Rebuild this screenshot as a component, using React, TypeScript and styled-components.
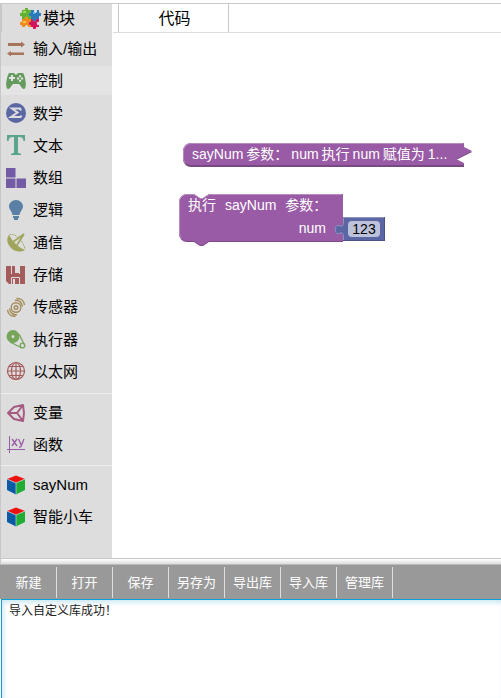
import React, { useState } from "react";
import styled, { createGlobalStyle } from "styled-components";

const sans = `"Liberation Sans", "Noto Sans CJK SC", sans-serif`;

const GlobalStyle = createGlobalStyle`
  *, *::before, *::after { box-sizing: border-box; }
  html, body, #root { height: 100%; }
  body { margin: 0; background: #fff; font-family: ${sans}; color: #000; }
  button, input, textarea { font: inherit; }
`;

const Page = styled.div`
  min-height: 100%;
  display: flex;
  flex-direction: column;
  padding-top: 3px;
`;

const Workbench = styled.main`
  display: grid;
  grid-template-columns: 112px minmax(0, 1fr);
  border-top: 1px solid #c8c8c8;
  border-left: 1px solid #c8c8c8;
  border-bottom: 1px solid #c8c8c8;
`;

const Sidebar = styled.aside`
  background: #ddd;
  margin-right: 1px;
  padding-bottom: 21px;
`;

const SidebarTitle = styled.h1`
  margin: 0;
  height: 28px;
  border-left: 1px solid #c8c8c8;
  padding: 0 0 3px 18px;
  display: flex;
  align-items: center;
  gap: 2px;
  font-size: 16px;
  font-weight: 400;
  svg { position: relative; top: 2px; }
`;

const Group = styled.ul<{ $size: "large" | "small" }>`
  list-style: none;
  margin: 0;
  padding: ${(p) => (p.$size === "large" ? "2px 0 7px" : "4px 0 6px")};
  min-height: ${(p) => (p.$size === "large" ? "361px" : "72px")};
  display: flex;
  flex-direction: column;
  justify-content: space-between;
  & + & { border-top: 1px solid #eee; }
`;

const Category = styled.button<{ $active: boolean }>`
  display: flex;
  align-items: center;
  gap: 7px;
  width: 100%;
  height: 29px;
  padding: 0 0 0 5px;
  border: 0;
  background: ${(p) => (p.$active ? "#e4e4e4" : "transparent")};
  color: #000;
  font-size: 15px;
  line-height: 29px;
  text-align: left;
  white-space: nowrap;
  svg { flex: none; }
`;

const Editor = styled.section`
  display: flex;
  flex-direction: column;
`;

const TabBar = styled.div`
  height: 29px;
  display: flex;
  padding-left: 5px;
  border-bottom: 1px solid #ddd;
`;

const Tab = styled.button`
  width: 111px;
  padding: 0 0 3px 2px;
  border: 1px solid #c8c8c8;
  border-width: 0 1px;
  background: #fff;
  color: #000;
  font-size: 16px;
`;

const Canvas = styled.div`
  position: relative;
  flex: 1;
`;

const Block = styled.div<{ $x: number; $y: number }>`
  position: absolute;
  left: ${(p) => p.$x}px;
  top: ${(p) => p.$y}px;
  color: #fff;
  font-size: 14px;
  line-height: 23px;
  white-space: nowrap;
`;

const Shape = styled.svg`
  position: absolute;
  left: 0;
  top: 0;
  overflow: visible;
`;

const Line = styled.div<{ $gap: number; $end?: boolean }>`
  position: relative;
  display: flex;
  align-items: center;
  gap: ${(p) => p.$gap}px;
  padding: ${(p) => (p.$end ? "0 17px 0 0" : "0 9px")};
  justify-content: ${(p) => (p.$end ? "flex-end" : "flex-start")};
  height: 23px;
`;

const ProcedureBody = styled.div`
  width: 164px;
`;

const NumberField = styled.input`
  position: relative;
  display: block;
  width: 32px;
  height: 16px;
  margin: 4px 0 0 5px;
  padding: 0;
  border: 0;
  border-radius: 4px;
  background: #bdc2db;
  color: #000;
  font-size: 14px;
  line-height: 16px;
  text-align: center;
`;

const Splitter = styled.div`
  height: 6px;
  background: linear-gradient(#fff, #ddd);
  border-bottom: 1px solid #bbb;
  border-left: 1px solid #c8c8c8;
`;

const Toolbar = styled.nav`
  display: flex;
  align-items: stretch;
  height: 34px;
  padding: 2px 0 1px 1px;
  background: #999;
`;

const ToolButton = styled.button`
  width: 56px;
  padding: 0 0 2px;
  border: 0;
  border-right: 1px solid #ddd;
  background: transparent;
  color: #fff;
  font-size: 13px;
  white-space: nowrap;
`;

const Console = styled.textarea`
  display: block;
  flex: 1;
  min-height: 99px;
  margin-left: 1px;
  padding: 2px 7px;
  border: solid #0c9fd8;
  border-width: 1px 0 0 1px;
  border-radius: 0;
  outline: 0;
  resize: none;
  background: #fff;
  box-shadow: inset 2px 3px 4px #cfeaf4;
  color: #222;
  font-family: "Noto Sans CJK SC", sans-serif;
  font-size: 12px;
  line-height: 16px;
`;

const Icon = ({ children }: { children: React.ReactNode }) => (
  <svg width="20" height="20" viewBox="0 0 20 20" aria-hidden="true">
    {children}
  </svg>
);

const PuzzleIcon = () => (
  <svg width="21" height="21" viewBox="0 0 21 21" aria-hidden="true">
    <path fill="#5fb230" d="M2 2h3c-1-3 4-3 3 0h3v3c-3-1-3 4 0 3v3H8c1-3-4-3-3 0H2V8C-1 9-1 4 2 5z" />
    <path fill="#2b78bd" d="M11 2h3v2c1 2 3 1 3-1V2h2v3c3-1 3 4 0 3v3h-3c1 3-4 3-3 0h-2V8C8 9 8 4 11 5z" />
    <path fill="#f08a1d" d="M2 11h3c-1-3 4-3 3 0h3v3c-3-1-3 4 0 3v2H8v-1c-1-2-3-1-3 1H2v-2c-3 1-3-4 0-3z" />
    <path fill="#d3145c" d="M11 11h2c-1 3 4 3 3 0h3v3c-3-1-3 4 0 3v2h-3c1 3-4 3-3 0h-2v-2c-3 1-3-4 0-3z" />
    <path fill="#a4d65a" d="M3 3h3v2H3z" />
    <path fill="#ffc34a" d="M3 13h3v2H3z" />
    <path fill="#57b7e3" d="M13 4h2v2h-2z" />
  </svg>
);

const CubeIcon = () => (
  <Icon>
    <path fill="#ee1111" d="M10 .5 19 4l-9 4-9-4z" />
    <path fill="#0a5aa5" d="m1 4 9 4v11.500L1 15z" />
    <path fill="#20ad35" d="m19 4-9 4v11.500l9-4.500z" />
    <path fill="none" stroke="#dce6e8" strokeWidth=".6" d="m1 4 9 4 9-4M10 8v11" />
  </Icon>
);

type CategoryItem = { label: string; icon: React.ReactNode };

const groups: CategoryItem[][] = [
  [
    {
      label: "输入/输出",
      icon: (
        <Icon>
          <path fill="#a5745b" d="M2 4h13V2.500l4 3-4 3V7H2zM18 13.500H5V12l-4 2.500 4 3V16h13z" />
        </Icon>
      ),
    },
    {
      label: "控制",
      icon: (
        <Icon>
          <path
            fill="#659b5f"
            fillRule="evenodd"
            d="M3 2h5l1 1.500h2L12 2h5c1.500 2 2 5 2.500 8s.5 5-.5 7.500c-1.500 1-3 0-4-2L13 13H7l-2 2.500c-1 2-2.500 3-4 2C0 15 0 13 .5 10S1.500 4 3 2zM5 4v2H3v2h2v2h2V8h2V6H7V4zM14 4a1.200 1.200 0 1 0 .1 0zM12 6.300a1.200 1.200 0 1 0 .1 0zM16 6.300a1.200 1.200 0 1 0 .1 0zM14 8.500a1.200 1.200 0 1 0 .1 0z"
          />
        </Icon>
      ),
    },
    {
      label: "数学",
      icon: (
        <Icon>
          <circle cx="10" cy="10" r="10" fill="#5b67a5" />
          <path fill="none" stroke="#ddd" strokeWidth="2" d="M15 7.500 14 5.500H6l5.500 4L5 14h9.500l1-1.500" />
        </Icon>
      ),
    },
    {
      label: "文本",
      icon: (
        <Icon>
          <path
            fill="#5ba58c"
            d="M1 0h18v6h-1.500c-.5-3-1.500-4-4-4H12v14.500c0 1.500.5 2 3 2V20H5v-1.500c2.500 0 3-.5 3-2V2H6.500c-2.500 0-3.500 1-4 4H1z"
          />
        </Icon>
      ),
    },
    {
      label: "数组",
      icon: (
        <Icon>
          <path fill="#745ba5" d="M0 0h9.500v9.500H0zM0 10.500h9.500V20H0zM10.500 10.500H20V20h-9.500z" />
        </Icon>
      ),
    },
    {
      label: "逻辑",
      icon: (
        <Icon>
          <path fill="#5b80a5" d="M10 0c4 0 7 3 7 6.500 0 3-3 5-3.500 8.500h-7C6 11.500 3 9.500 3 6.500 3 3 6 0 10 0zM7 16h6v2h-1v2H8v-2H7z" />
        </Icon>
      ),
    },
    {
      label: "通信",
      icon: (
        <Icon>
          <path fill="#a0a55b" d="M3 3c4 7 9 12 16 15-4 2.500-10 2-14-2S0 7 3 3z" />
          <path fill="none" stroke="#a0a55b" strokeWidth="1" strokeDasharray="2 1" d="M3 3c5-3 14 5 16 14" />
          <path fill="none" stroke="#a0a55b" strokeWidth="1.600" d="m7 10 11-8-7 11" />
        </Icon>
      ),
    },
    {
      label: "存储",
      icon: (
        <Icon>
          <path fill="#a55b5b" d="M0 1h19v18H3l-3-3z" />
          <path fill="none" stroke="#ddd" d="M5.500 1v8M13.500 1v8M5.500 19v-6.500h8V19" />
          <path fill="#ddd" d="M9 1h4v7H9zM7 14h2v5H7z" />
        </Icon>
      ),
    },
    {
      label: "传感器",
      icon: (
        <Icon>
          <g fill="none" stroke="#a58c5b" strokeWidth="1.400">
            <circle cx="10" cy="10.500" r="1.800" />
            <circle cx="10" cy="10.500" r="4.800" />
            <path d="M9 3.500c4-1 7 2 7.500 6M10.500 1.500c4.500-.5 7.500 2.500 8 6.500M11 17.500c-4 1-7-2-7.500-6M9.500 19.300c-4.500.5-7.500-2.500-8-6.500" />
          </g>
        </Icon>
      ),
    },
    {
      label: "执行器",
      icon: (
        <Icon>
          <path fill="#74a55b" fillRule="evenodd" d="M7 1a6.500 6.500 0 1 1 0 13A6.500 6.500 0 0 1 7 1zm0 5a1.500 1.500 0 1 0 0 3 1.500 1.500 0 0 0 0-3z" />
          <path fill="none" stroke="#74a55b" strokeWidth="1.300" d="m13 5 5.500 11M4 13l12 6" />
          <circle cx="16.500" cy="16.500" r="2.300" fill="none" stroke="#74a55b" strokeWidth="1.300" />
        </Icon>
      ),
    },
    {
      label: "以太网",
      icon: (
        <Icon>
          <g fill="none" stroke="#a55b5b" strokeWidth="1.200">
            <circle cx="10" cy="10" r="8.500" />
            <ellipse cx="10" cy="10" rx="4.500" ry="8.500" />
            <path d="M10 1v18M1 10h18M3 5.500h14M3 14.500h14" />
          </g>
        </Icon>
      ),
    },
  ],
  [
    {
      label: "变量",
      icon: (
        <Icon>
          <path
            fill="none"
            stroke="#a55b80"
            strokeWidth="2"
            strokeLinejoin="round"
            d="M2 10 8 4l9-2 1 8-1 8-9-2zM2 10h9l6-8M11 10l6 8"
          />
        </Icon>
      ),
    },
    {
      label: "函数",
      icon: (
        <Icon>
          <path fill="none" stroke="#995ba5" d="M3.500 1v17M1 14.500h18" />
          <path fill="none" stroke="#995ba5" strokeWidth="1.300" d="m6 4 5 7M11 4l-5 7M12.500 4l3 6.500M18 4l-3 7.500-2 1" />
        </Icon>
      ),
    },
  ],
  [
    { label: "sayNum", icon: <CubeIcon /> },
    { label: "智能小车", icon: <CubeIcon /> },
  ],
];

const tools = ["新建", "打开", "保存", "另存为", "导出库", "导入库", "管理库"];

const collapsedWords = ["sayNum", "参数：", "num", "执行", "num", "赋值为", "1..."];

const PURPLE = "#995ba5";

const CollapsedBlock = () => (
  <Block $x={70} $y={110}>
    <Shape width="290" height="24">
      <path fill="#7a4984" d="M0 9a8 8 0 0 1 8-8h273v4l8 4-16 8 8 4v3H8a8 8 0 0 1-8-8z" />
      <path fill={PURPLE} d="M0 8a8 8 0 0 1 8-8h273v4l8 4-16 8 8 4v2H8a8 8 0 0 1-8-8z" />
      <path fill="none" stroke="#b88cc0" d="M2.500 20.500A8 8 0 0 1 .5 15V8A7.500 7.500 0 0 1 8 .5h272" />
    </Shape>
    <Line $gap={3}>
      {collapsedWords.map((word, i) => (
        <span key={i}>{word}</span>
      ))}
    </Line>
  </Block>
);

const CallBlock = () => {
  const [value, setValue] = useState("123");
  return (
    <>
      <Block $x={66} $y={161}>
        <Shape width="164" height="52">
          <path fill="#7a4984" d="M0 9a8 8 0 0 1 8-8h7l6 4h3l6-4h134v47H30l-6 4h-3l-6-4H8a8 8 0 0 1-8-8z" />
          <path fill={PURPLE} d="M0 8a8 8 0 0 1 8-8h7l6 4h3l6-4h134v47H30l-6 4h-3l-6-4H8a8 8 0 0 1-8-8z" />
          <path fill="none" stroke="#b88cc0" d="M2.500 44.500A8 8 0 0 1 .5 39V8A7.500 7.500 0 0 1 8 .5h7l6 4h3l6-4h133" />
        </Shape>
        <ProcedureBody>
          <Line $gap={9}>
            <span>执行</span>
            <span>sayNum</span>
            <span>参数：</span>
          </Line>
          <Line $gap={0} $end>num</Line>
        </ProcedureBody>
      </Block>
      <Block $x={230} $y={184}>
        <Shape width="42" height="24">
          <path fill="#495284" d="M0 0h42v24H0z" />
          <path fill="#5b67a5" d="M0 0h41v23H0v-3c0-10-8 2.500-8-7.500S0 15 0 5z" />
          <path fill="none" stroke="#8c95c0" d="M.5 23V20c0-10-8 2.500-8-7.500S.5 15 .5 5V.5H41" />
        </Shape>
        <NumberField aria-label="num" value={value} onChange={(e) => setValue(e.target.value)} />
      </Block>
    </>
  );
};

export default function App() {
  const [active, setActive] = useState("控制");
  const [log, setLog] = useState("导入自定义库成功！");
  return (
    <Page>
      <GlobalStyle />
      <Workbench>
        <Sidebar>
          <SidebarTitle>
            <PuzzleIcon />
            模块
          </SidebarTitle>
          {groups.map((items, i) => (
            <Group key={i} $size={items.length > 2 ? "large" : "small"}>
              {items.map((item) => (
                <li key={item.label}>
                  <Category $active={item.label === active} onClick={() => setActive(item.label)}>
                    {item.icon}
                    {item.label}
                  </Category>
                </li>
              ))}
            </Group>
          ))}
        </Sidebar>
        <Editor>
          <TabBar>
            <Tab>代码</Tab>
          </TabBar>
          <Canvas>
            <CollapsedBlock />
            <CallBlock />
          </Canvas>
        </Editor>
      </Workbench>
      <Splitter />
      <Toolbar>
        {tools.map((name) => (
          <ToolButton key={name}>{name}</ToolButton>
        ))}
      </Toolbar>
      <Console aria-label="输出" value={log} onChange={(e) => setLog(e.target.value)} />
    </Page>
  );
}
